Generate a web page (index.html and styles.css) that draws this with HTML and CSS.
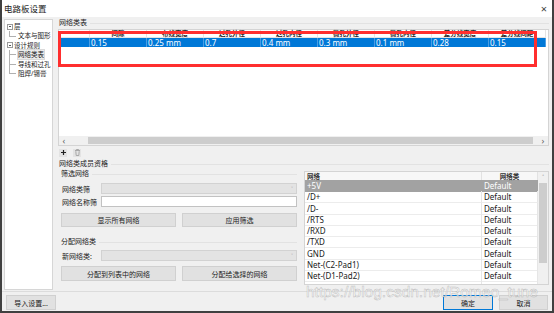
FILE: index.html
```html
<!DOCTYPE html>
<html lang="zh-CN">
<head>
    <meta charset="UTF-8">
    <title>电路板设置</title>
    <link rel="stylesheet" href="styles.css">
</head>
<body>

<div class="window">
    <div class="titlebar">
        <span class="title">电路板设置</span>
        <span class="close">×</span>
    </div>

    <div class="content">
        <ul class="tree">
            <li class="node"><span class="toggle"></span>层</li>
            <li class="leaf last">文本与图形</li>
            <li class="node"><span class="toggle"></span>设计规则</li>
            <li class="leaf selected"><span>网络类表</span></li>
            <li class="leaf">导线和过孔</li>
            <li class="leaf last">阻焊/锡膏</li>
        </ul>

        <div class="main">
            <div class="section-label">网络类表</div>

            <div class="classes">
                <div class="class-grid">
                    <div class="hcell"></div>
                    <div class="hcell">间隙</div>
                    <div class="hcell">布线宽度</div>
                    <div class="hcell">过孔外径</div>
                    <div class="hcell">过孔内径</div>
                    <div class="hcell">微孔外径</div>
                    <div class="hcell">微孔内径</div>
                    <div class="hcell">差分线宽度</div>
                    <div class="hcell">差分线间距</div>

                    <div class="cell"></div>
                    <div class="cell">0.15</div>
                    <div class="cell">0.25 mm</div>
                    <div class="cell">0.7</div>
                    <div class="cell">0.4 mm</div>
                    <div class="cell">0.3 mm</div>
                    <div class="cell">0.1 mm</div>
                    <div class="cell">0.28</div>
                    <div class="cell">0.15</div>
                </div>
                <div class="hscroll">
                    <span class="arrow">&lsaquo;</span>
                    <div class="track"><div class="thumb"></div></div>
                    <span class="arrow">&rsaquo;</span>
                </div>
            </div>

            <div class="tools">
                <span class="tool">
                    <svg width="7" height="7" viewBox="0 0 7 7"><path d="M3.5 1v5M1 3.5h5" stroke="#222" stroke-width="1.2"/></svg>
                </span>
                <span class="tool">
                    <svg width="7" height="7" viewBox="0 0 7 7"><path d="M1 1.5h5M2.5 1V.5h2V1M1.8 2.2l.4 4.3h2.6l.4-4.3" fill="none" stroke="#999" stroke-width=".8"/></svg>
                </span>
            </div>

            <div class="group-title">网络类成员资格</div>

            <div class="members">
                <div class="filters">
                    <div class="sub-title">筛选网络</div>
                    <div class="field-row first">
                        <span class="field-label">网络类筛</span>
                        <div class="combo"><span>&#709;</span></div>
                    </div>
                    <div class="field-row">
                        <span class="field-label">网络名称筛</span>
                        <div class="input"></div>
                    </div>
                    <div class="btn-row">
                        <div class="btn">显示所有网络</div>
                        <div class="btn">应用筛选</div>
                    </div>

                    <div class="sub-title assign">分配网络类</div>
                    <div class="field-row second">
                        <span class="field-label">新网络类:</span>
                        <div class="combo"><span>&#709;</span></div>
                    </div>
                    <div class="btn-row last">
                        <div class="btn">分配到列表中的网络</div>
                        <div class="btn">分配给选择的网络</div>
                    </div>
                </div>

                <div class="netlist">
                    <div class="nets">
                        <div class="net-head">
                            <span>网络</span>
                            <span class="center">网络类</span>
                        </div>
                        <div class="net-row selected"><span>+5V</span><span>Default</span></div>
                        <div class="net-row"><span>/D+</span><span>Default</span></div>
                        <div class="net-row"><span>/D-</span><span>Default</span></div>
                        <div class="net-row"><span>/RTS</span><span>Default</span></div>
                        <div class="net-row"><span>/RXD</span><span>Default</span></div>
                        <div class="net-row"><span>/TXD</span><span>Default</span></div>
                        <div class="net-row"><span>GND</span><span>Default</span></div>
                        <div class="net-row"><span>Net-(C2-Pad1)</span><span>Default</span></div>
                        <div class="net-row"><span>Net-(D1-Pad2)</span><span>Default</span></div>
                        <div class="net-row"><span></span><span></span></div>
                    </div>
                    <div class="vscroll">
                        <span class="arrow">&#708;</span>
                        <div class="vtrack"><div class="vthumb"></div></div>
                        <span class="arrow">&#709;</span>
                    </div>
                </div>
            </div>
        </div>
    </div>

    <div class="footer">
        <div class="btn import">导入设置...</div>
        <div class="spacer"></div>
        <div class="btn ok">确定</div>
        <div class="btn cancel">取消</div>
    </div>

    <div class="red-box"></div>
    <div class="watermark">https://blog.csdn.net/Romeo_tune</div>
</div>

</body>
</html>
```

FILE: styles.css
```css
* {
    box-sizing: border-box;
}
body {
    margin: 0;
    font-family: "Noto Sans", "Noto Sans CJK SC", sans-serif;
    font-size: 7px;
    color: #1a1a1a;
    background: #fff;
}
.window {
    position: relative;
    width: 554px;
    height: 313px;
    background: #f0f0f0;
    border-left: 2px solid #404040;
    border-right: 2px solid #404040;
    border-bottom: 2px solid #404040;
    display: flex;
    flex-direction: column;
    overflow: hidden;
}
.titlebar {
    height: 17px;
    background: #fff;
    display: flex;
    align-items: center;
    justify-content: space-between;
    padding: 0 5px 0 2px;
}
.title {
    font-size: 8.5px;
    line-height: 17px;
}
.close {
    font-size: 11px;
    color: #444;
}
.content {
    height: 274px;
    display: flex;
}

/* tree */
.tree {
    list-style: none;
    margin: 2px 0 1px 2px;
    padding: 2px 0 0 0;
    width: 49px;
    background: #fff;
    border: 1px solid #d6d6d6;
    font-size: 6.5px;
}
.tree li {
    height: 9.4px;
    line-height: 9.4px;
    white-space: nowrap;
}
.tree .node {
    padding-left: 2px;
}
.toggle {
    display: inline-block;
    width: 6px;
    height: 6px;
    margin-right: 1px;
    vertical-align: -0.5px;
    border: 1px solid #9a9a9a;
    background: linear-gradient(#555, #555) center / 2px 1px no-repeat;
}
.tree .leaf {
    padding-left: 13px;
    background:
        linear-gradient(#b0b0b0, #b0b0b0) 4px 0 / 1px 100% no-repeat,
        linear-gradient(#b0b0b0, #b0b0b0) 4px 50% / 7px 1px no-repeat;
}
.tree .leaf.last {
    background:
        linear-gradient(#b0b0b0, #b0b0b0) 4px 0 / 1px 50% no-repeat,
        linear-gradient(#b0b0b0, #b0b0b0) 4px 50% / 7px 1px no-repeat;
}
.tree .selected span {
    background: #ececec;
    outline: 1px solid #dadada;
}

/* main */
.main {
    flex: 1;
    margin-left: 4px;
    padding: 0 3px 0 1px;
    display: flex;
    flex-direction: column;
}
.section-label {
    height: 10px;
    line-height: 10px;
    margin-top: 1px;
    padding-left: 1px;
    display: flex;
    gap: 3px;
}
.section-label::after,
.group-title::after,
.sub-title::after {
    content: "";
    flex: 1;
    border-top: 1px solid #e2e2e2;
    align-self: center;
}
.classes {
    margin-top: 1px;
    height: 117px;
    background: #fff;
    border: 1px solid #d4d4d4;
    display: flex;
    flex-direction: column;
}
.class-grid {
    flex: 1;
    display: grid;
    grid-template-columns: 31px repeat(8, 57px);
    grid-template-rows: 8px 9px;
    align-content: start;
}
.hcell {
    font-family: "Noto Sans CJK SC", sans-serif;
    font-size: 6.5px;
    font-weight: 700;
    color: #2a2a2a;
    text-align: center;
    line-height: 7px;
    border-right: 1px solid #e4e4e4;
    border-bottom: 1px solid #e4e4e4;
}
.cell {
    background: #0078d7;
    color: #fff;
    font-size: 8px;
    line-height: 9px;
    padding-left: 1px;
    border-right: 1px solid #4a9de3;
}
.hscroll {
    height: 9px;
    display: flex;
    background: #f0f0f0;
}
.hscroll .arrow {
    width: 10px;
    text-align: center;
    line-height: 9px;
    color: #606060;
    font-size: 9px;
}
.track {
    flex: 1;
    padding: 1px 5px 1px 19px;
}
.thumb {
    height: 100%;
    background: #cdcdcd;
}
.tools {
    height: 13px;
    display: flex;
    align-items: center;
    gap: 6px;
    padding-left: 1px;
}
.tool {
    width: 8px;
    height: 8px;
    background: #e3e3e3;
    display: flex;
    align-items: center;
    justify-content: center;
}
.group-title {
    height: 10px;
    line-height: 10px;
    padding-left: 1px;
    display: flex;
    gap: 3px;
}

/* members */
.members {
    flex: 1;
    display: flex;
    gap: 4px;
}
.filters {
    width: 242px;
    padding: 0 3px;
    display: flex;
    flex-direction: column;
}
.sub-title {
    height: 10px;
    line-height: 10px;
    display: flex;
    gap: 3px;
}
.sub-title.assign {
    margin-top: 10px;
}
.field-row {
    height: 11px;
    display: flex;
    align-items: center;
    margin-top: 2px;
}
.field-row.first {
    margin-top: 4px;
}
.field-row.second {
    margin-top: 3px;
}
.field-label {
    width: 40px;
    padding-left: 1px;
    white-space: nowrap;
}
.combo {
    flex: 1;
    height: 11px;
    background: #e3e3e3;
    border: 1px solid #d2d2d2;
    display: flex;
    justify-content: flex-end;
    align-items: center;
    padding-right: 3px;
    color: #9a9a9a;
    font-size: 6px;
}
.input {
    flex: 1;
    height: 11px;
    background: #fff;
    border: 1px solid #c2c2c2;
}
.btn-row {
    display: flex;
    gap: 6px;
    margin-top: 6px;
}
.btn-row.last {
    margin-top: 5px;
}
.btn-row .btn {
    flex: 1;
    height: 14px;
}
.btn-row.last .btn {
    height: 15px;
}
.btn {
    background: #e1e1e1;
    border: 1px solid #d0d0d0;
    display: flex;
    align-items: center;
    justify-content: center;
    color: #222;
    white-space: nowrap;
}

/* net list */
.netlist {
    margin-top: 2px;
    width: 245px;
    height: 114px;
    border: 1px solid #d4d4d4;
    background: #fff;
    display: flex;
    overflow: hidden;
}
.nets {
    flex: 1;
    overflow: hidden;
}
.net-head,
.net-row {
    display: grid;
    grid-template-columns: 177px 56px;
}
.net-head {
    height: 8px;
    line-height: 8px;
    font-family: "Noto Sans CJK SC", sans-serif;
    font-size: 6.5px;
    font-weight: 700;
    color: #333;
    background: #f7f7f7;
}
.net-head span {
    padding-left: 2px;
    border-right: 1px solid #e2e2e2;
}
.net-head .center {
    text-align: center;
    padding-left: 0;
}
.net-row {
    height: 11.25px;
    line-height: 11px;
    font-size: 8px;
}
.net-row span {
    padding-left: 2px;
    border-right: 1px solid #e6e6e6;
    border-bottom: 1px solid #ececec;
}
.net-row.selected {
    background: #a2a2a2;
    color: #fff;
}
.net-row.selected span {
    border-color: #a2a2a2;
}
.vscroll {
    width: 10px;
    background: #f0f0f0;
    display: flex;
    flex-direction: column;
}
.vscroll .arrow {
    height: 10px;
    line-height: 10px;
    text-align: center;
    font-size: 6px;
    color: #606060;
}
.vtrack {
    flex: 1;
    padding: 1px 1px 19px;
}
.vthumb {
    height: 80px;
    background: #cdcdcd;
}

/* footer */
.footer {
    flex: 1;
    border-top: 1px solid #dcdcdc;
    display: flex;
    gap: 6px;
    padding: 3px 4px 0 4px;
}
.footer .btn {
    height: 15px;
    width: 50px;
}
.footer .spacer {
    flex: 1;
}
.footer .ok {
    border-color: #0078d7;
}
.footer .cancel {
    width: 49px;
}

/* annotation overlays */
.red-box {
    position: absolute;
    left: 56px;
    top: 31px;
    width: 479px;
    height: 36px;
    border: 3px solid #ff2e2e;
}
.watermark {
    position: absolute;
    left: 304px;
    top: 283px;
    font-family: "Liberation Sans", sans-serif;
    font-size: 15.5px;
    color: rgba(255, 255, 255, 0.75);
    -webkit-text-stroke: 0.5px rgba(140, 140, 140, 0.55);
    white-space: nowrap;
}
```
